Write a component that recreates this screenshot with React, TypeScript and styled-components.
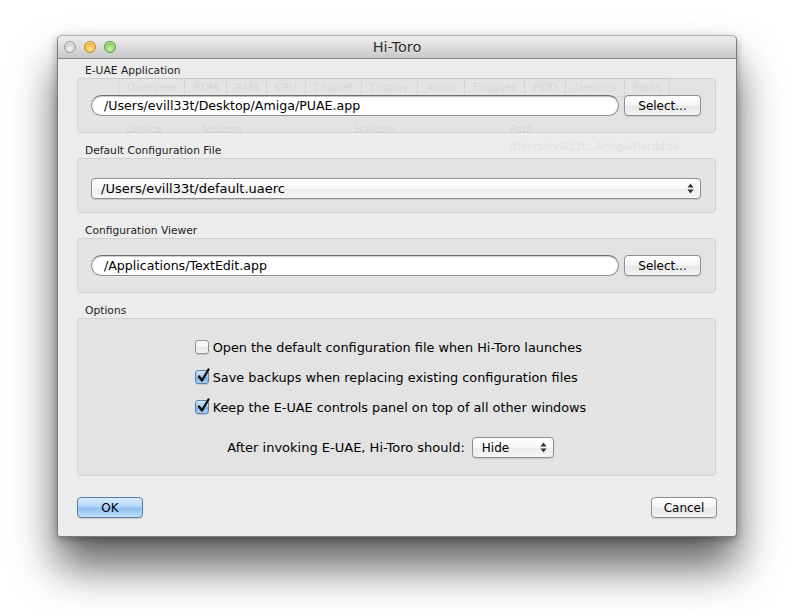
import React from "react";
import styled, { createGlobalStyle } from "styled-components";

const Global = createGlobalStyle`
  html, body { margin: 0; padding: 0; background: #ffffff; }
  body {
    font-family: "DejaVu Sans", "Liberation Sans", sans-serif;
    color: #000;
  }
`;

const Page = styled.div`
  width: 794px;
  height: 616px;
  box-sizing: border-box;
  padding: 35px 0 0 57px;
  overflow: hidden;
`;

const Window = styled.div`
  position: relative;
  width: 680px;
  height: 502px;
  box-sizing: border-box;
  background: #ececec;
  border: 1px solid #7c7c7c;
  border-top-color: #b0b0b0;
  border-radius: 5px 5px 3px 3px;
  box-shadow: 0 30px 44px rgba(0, 0, 0, 0.62), 0 3px 8px rgba(0, 0, 0, 0.3);
  display: flex;
  flex-direction: column;
`;

const TitleBar = styled.div`
  flex: none;
  height: 22px;
  display: grid;
  grid-template-columns: 1fr auto 1fr;
  align-items: center;
  background: linear-gradient(#ededed, #dcdcdc 50%, #c8c8c8);
  border-bottom: 1px solid #8a8a8a;
  border-radius: 5px 5px 0 0;
`;

const Lights = styled.div`
  display: flex;
  gap: 8px;
  padding-left: 6px;
`;

const Light = styled.span<{ $c: "gray" | "yellow" | "green" }>`
  width: 12px;
  height: 12px;
  border-radius: 50%;
  box-sizing: border-box;
  border: 1px solid
    ${(p) => (p.$c === "gray" ? "#9c9c9c" : p.$c === "yellow" ? "#c28b25" : "#5d9b3e")};
  background: ${(p) =>
    p.$c === "gray"
      ? "radial-gradient(circle at 50% 70%, #f6f6f6, #d2d2d2 55%, #bcbcbc)"
      : p.$c === "yellow"
      ? "radial-gradient(circle at 50% 70%, #ffe9a0, #f4b63a 55%, #d98e18)"
      : "radial-gradient(circle at 50% 70%, #d7f7b4, #8fd165 55%, #5aa83a)"};
  box-shadow: inset 0 1px 1px rgba(255, 255, 255, 0.7);
`;

const Title = styled.div`
  font-size: 14.5px;
  color: #2e2e2e;
  text-shadow: 0 1px 0 rgba(255, 255, 255, 0.6);
`;

const Content = styled.div`
  flex: 1;
  display: flex;
  flex-direction: column;
  padding: 4px 20px 0 19px;
`;

const Section = styled.div`
  display: flex;
  flex-direction: column;
  & + & {
    margin-top: 10px;
  }
`;

const SectionLabel = styled.div`
  height: 15px;
  line-height: 15px;
  padding-left: 8px;
  font-size: 10.7px;
  color: #222;
`;

const GroupBox = styled.div<{ $h: number; $shift?: number }>`
  height: ${(p) => p.$h}px;
  box-sizing: border-box;
  background: #e3e3e3;
  border: 1px solid #d2d2d2;
  border-radius: 4px;
  display: flex;
  align-items: center;
  padding: ${(p) => p.$shift ?? 0}px 14px 0 13px;
  gap: 5px;
`;

const PathField = styled.div`
  flex: 1;
  height: 21px;
  box-sizing: border-box;
  border-radius: 11px;
  border: 1px solid #8c8c8c;
  border-top-color: #6e6e6e;
  background: #ffffff;
  box-shadow: inset 0 1px 1px rgba(0, 0, 0, 0.2);
  padding-left: 12px;
  display: flex;
  align-items: center;
  font-size: 12.6px;
  white-space: nowrap;
`;

const PushButton = styled.div<{ $w: number; $default?: boolean }>`
  width: ${(p) => p.$w}px;
  height: 21px;
  box-sizing: border-box;
  border-radius: 4px;
  border: 1px solid ${(p) => (p.$default ? "#5d7ea8" : "#8e8e8e")};
  background: ${(p) =>
    p.$default
      ? "linear-gradient(#d8ebfd, #b3d6f7 45%, #8fc0f1 55%, #bfe0fb)"
      : "linear-gradient(#ffffff, #f5f5f5 45%, #e8e8e8 55%, #f2f2f2)"};
  box-shadow: 0 1px 1px rgba(0, 0, 0, 0.12);
  display: flex;
  align-items: center;
  justify-content: center;
  font-size: 12px;
`;

const Popup = styled.div<{ $w?: number; $fs: number }>`
  ${(p) => (p.$w ? `width: ${p.$w}px;` : "flex: 1;")}
  height: 21px;
  box-sizing: border-box;
  border-radius: 4px;
  border: 1px solid #8e8e8e;
  background: linear-gradient(#ffffff, #f7f7f7 50%, #ececec 55%, #f6f6f6);
  box-shadow: 0 1px 1px rgba(0, 0, 0, 0.12);
  display: flex;
  align-items: center;
  justify-content: space-between;
  padding: 0 6px 0 9px;
  font-size: ${(p) => p.$fs}px;
  white-space: nowrap;
`;

const Arrows = () => (
  <svg width="7" height="11" viewBox="0 0 7 11">
    <path d="M3.5 0.5 L6.5 4.5 L0.5 4.5 Z" fill="#333" />
    <path d="M3.5 10.5 L6.5 6.5 L0.5 6.5 Z" fill="#333" />
  </svg>
);

const OptionsBox = styled.div`
  height: 158px;
  box-sizing: border-box;
  background: #e3e3e3;
  border: 1px solid #d2d2d2;
  border-radius: 4px;
  display: flex;
  flex-direction: column;
  align-items: center;
  padding: 13px 12px 0 0;
`;

const CheckList = styled.div`
  display: flex;
  flex-direction: column;
`;

const CheckRow = styled.label`
  height: 30px;
  display: flex;
  align-items: center;
  gap: 4px;
  font-size: 12.85px;
  white-space: nowrap;
`;

const Box = styled.span<{ $on?: boolean }>`
  position: relative;
  width: 14px;
  height: 14px;
  box-sizing: border-box;
  border-radius: 3px;
  border: 1px solid ${(p) => (p.$on ? "#5f7fa6" : "#8e8e8e")};
  background: ${(p) =>
    p.$on
      ? "linear-gradient(#d2e6fb, #9fc8f2 50%, #74aee9 55%, #a9d2f6)"
      : "linear-gradient(#ffffff, #f3f3f3 50%, #e6e6e6 55%, #f4f4f4)"};
  box-shadow: 0 1px 1px rgba(0, 0, 0, 0.12);
  flex: none;
`;

const Tick = styled.svg`
  position: absolute;
  left: 1px;
  top: -3px;
`;

const Check = ({ on }: { on?: boolean }) => (
  <Box $on={on}>
    {on && (
      <Tick width="13" height="15" viewBox="0 0 13 15">
        <path
          d="M2 8.5 L5 12.5 L11.5 1.5"
          fill="none"
          stroke="#111"
          strokeWidth="2.3"
          strokeLinecap="round"
          strokeLinejoin="round"
        />
      </Tick>
    )}
  </Box>
);

const AfterRow = styled.div`
  margin-top: 15px;
  display: flex;
  align-items: center;
  gap: 7px;
  font-size: 13px;
  white-space: nowrap;
`;

const Footer = styled.div`
  margin-top: 21px;
  margin-right: -1px;
  display: flex;
  justify-content: space-between;
`;

/* faint window behind (seen through the translucent sheet) */
const Ghost = styled.div`
  position: absolute;
  left: 60px;
  top: 42px;
  width: 600px;
  pointer-events: none;
  opacity: 0.055;
  display: flex;
  flex-direction: column;
  font-size: 10.5px;
  color: #000;
  white-space: nowrap;
`;

const GhostTabs = styled.div`
  display: flex;
  height: 17px;
  border: 1px solid #000;
  border-radius: 3px;
  align-self: flex-start;
`;

const GhostTab = styled.span`
  padding: 0 8px;
  line-height: 17px;
  & + & {
    border-left: 1px solid #000;
  }
`;

const GhostTable = styled.div`
  margin: 26px 0 0 8px;
  display: grid;
  grid-template-columns: 77px 152px 155px 200px;
  row-gap: 5px;
`;

export default function App() {
  return (
    <>
      <Global />
      <Page>
        <Window>
          <TitleBar>
            <Lights>
              <Light $c="gray" />
              <Light $c="yellow" />
              <Light $c="green" />
            </Lights>
            <Title>Hi-Toro</Title>
            <span />
          </TitleBar>
          <Content>
            <Section>
              <SectionLabel>E-UAE Application</SectionLabel>
              <GroupBox $h={55}>
                <PathField>/Users/evill33t/Desktop/Amiga/PUAE.app</PathField>
                <PushButton $w={77}>Select...</PushButton>
              </GroupBox>
            </Section>
            <Section>
              <SectionLabel>Default Configuration File</SectionLabel>
              <GroupBox $h={55} $shift={5}>
                <Popup $fs={13}>
                  <span>/Users/evill33t/default.uaerc</span>
                  <Arrows />
                </Popup>
              </GroupBox>
            </Section>
            <Section>
              <SectionLabel>Configuration Viewer</SectionLabel>
              <GroupBox $h={55}>
                <PathField>/Applications/TextEdit.app</PathField>
                <PushButton $w={77}>Select...</PushButton>
              </GroupBox>
            </Section>
            <Section>
              <SectionLabel>Options</SectionLabel>
              <OptionsBox>
                <CheckList>
                  <CheckRow>
                    <Check />
                    Open the default configuration file when Hi-Toro launches
                  </CheckRow>
                  <CheckRow>
                    <Check on />
                    Save backups when replacing existing configuration files
                  </CheckRow>
                  <CheckRow>
                    <Check on />
                    Keep the E-UAE controls panel on top of all other windows
                  </CheckRow>
                </CheckList>
                <AfterRow>
                  After invoking E-UAE, Hi-Toro should:
                  <Popup $w={82} $fs={12}>
                    <span>Hide</span>
                    <Arrows />
                  </Popup>
                </AfterRow>
              </OptionsBox>
            </Section>
            <Footer>
              <PushButton $w={66} $default>
                OK
              </PushButton>
              <PushButton $w={66}>Cancel</PushButton>
            </Footer>
          </Content>
          <Ghost>
            <GhostTabs>
              {["Overview", "ROM", "RAM", "CPU", "Chipset", "Display", "Audio", "Floppies", "HDD", "Devices", "Paths"].map(
                (t) => (
                  <GhostTab key={t}>{t}</GhostTab>
                )
              )}
            </GhostTabs>
            <GhostTable>
              <span>Device</span>
              <span>Volume</span>
              <span>Handler</span>
              <span>Path</span>
              <span />
              <span />
              <span />
              <span>/Users/evill33t…Amiga/Harddisk</span>
            </GhostTable>
          </Ghost>
        </Window>
      </Page>
    </>
  );
}
